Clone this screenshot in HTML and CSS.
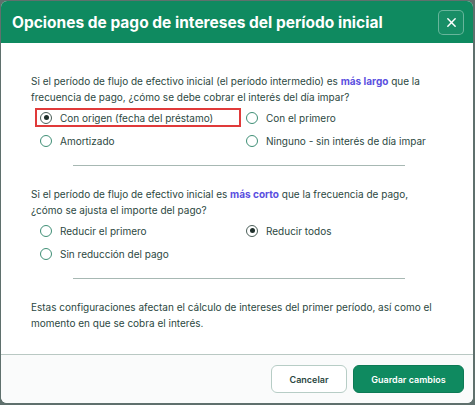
FILE: index.html
```html
<!DOCTYPE html>
<html lang="es">
<head>
<meta charset="utf-8">
<title>Opciones de pago</title>
<link rel="stylesheet" href="styles.css">
</head>
<body>
<div class="dialog">
  <header class="dialog-header">
    <h1 class="dialog-title">Opciones de pago de intereses del período inicial</h1>
    <button class="close-btn" aria-label="Cerrar">
      <svg width="11" height="11" viewBox="0 0 12 12"><path d="M2 2L10 10M10 2L2 10" stroke="#fff" stroke-width="1.6" stroke-linecap="round"/></svg>
    </button>
  </header>
  <main class="dialog-body">
    <section class="group">
      <p class="question"><span class="line">Si el período de flujo de efectivo inicial (el período intermedio) es <b class="accent">más largo</b> que la</span><span class="line">frecuencia de pago, ¿cómo se debe cobrar el interés del día impar?</span></p>
      <div class="options">
        <label class="option highlighted"><span class="radio checked"></span>Con origen (fecha del préstamo)</label>
        <label class="option"><span class="radio"></span>Con el primero</label>
        <label class="option"><span class="radio"></span>Amortizado</label>
        <label class="option"><span class="radio"></span>Ninguno - sin interés de día impar</label>
      </div>
    </section>
    <hr class="divider">
    <section class="group">
      <p class="question"><span class="line">Si el período de flujo de efectivo inicial es <b class="accent">más corto</b> que la frecuencia de pago,</span><span class="line">¿cómo se ajusta el importe del pago?</span></p>
      <div class="options">
        <label class="option"><span class="radio"></span>Reducir el primero</label>
        <label class="option"><span class="radio checked"></span>Reducir todos</label>
        <label class="option"><span class="radio"></span>Sin reducción del pago</label>
      </div>
    </section>
    <hr class="divider">
    <p class="note">Estas configuraciones afectan el cálculo de intereses del primer período, así como el momento en que se cobra el interés.</p>
  </main>
  <footer class="dialog-footer">
    <button class="btn btn-secondary">Cancelar</button>
    <button class="btn btn-primary">Guardar cambios</button>
  </footer>
</div>
</body>
</html>
```

FILE: styles.css
```css
* { box-sizing: border-box; }
html, body { height: 100%; }
body {
  margin: 0;
  padding: 1px 2px 2px 1px;
  background: #5f706d;
  font-family: Inter, "Noto Sans", sans-serif;
  color: #2c4842;
}
.dialog {
  height: 402px;
  background: #fff;
  border-radius: 6px;
  overflow: hidden;
  display: flex;
  flex-direction: column;
}
.dialog-header {
  background: #0f8a60;
  height: 42px;
  padding: 0 9px 0 11px;
  display: flex;
  align-items: center;
  justify-content: space-between;
}
.dialog-title {
  margin: 0;
  color: #fff;
  font-size: 15.5px;
  font-weight: 700;
}
.close-btn {
  width: 26px;
  height: 25px;
  border: 1px solid rgba(255,255,255,0.35);
  border-radius: 5px;
  background: rgba(255,255,255,0.04);
  display: flex;
  align-items: center;
  justify-content: center;
  padding: 0;
}
.dialog-body {
  flex: 1;
  padding: 30px 40px 0 30px;
  font-size: 10px;
}
.question {
  margin: 0 0 3px;
  line-height: 16px;
}
.question .line {
  display: block;
  white-space: nowrap;
}
.accent {
  color: #5a4fe0;
  font-weight: 700;
}
.options {
  display: grid;
  grid-template-columns: 206px 1fr;
  row-gap: 4px;
  margin-left: 4px;
}
.option {
  display: flex;
  align-items: center;
  gap: 8px;
  height: 19px;
  padding: 0 3px;
  border: 2px solid transparent;
  white-space: nowrap;
}
.option.highlighted {
  border-color: #e03a3a;
}
.radio {
  width: 12px;
  height: 12px;
  border: 1px solid #3f8f76;
  border-radius: 50%;
  display: inline-flex;
  align-items: center;
  justify-content: center;
  flex: none;
}
.radio.checked::after {
  content: "";
  width: 5px;
  height: 5px;
  border-radius: 50%;
  background: #1f2f2b;
}
.radio.checked { border-color: #4a5e58; }
.divider {
  width: 332px;
  margin: 15px 0 20px 42px;
  border: 0;
  border-top: 1px solid #a7b8b3;
}
.note {
  margin: 0;
  line-height: 16px;
}
.dialog-footer {
  border-top: 1px solid #b9c8c3;
  background: #fafbfb;
  padding: 10px 9px 10px 10px;
  display: flex;
  justify-content: flex-end;
  gap: 6px;
}
.btn {
  height: 28px;
  border-radius: 6px;
  font-family: Inter, "Noto Sans", sans-serif;
  font-size: 9px;
  font-weight: 600;
  padding: 0;
}
.btn-secondary {
  width: 76px;
  background: #fff;
  border: 1px solid #b7cdc6;
  color: #2c4842;
}
.btn-primary {
  width: 111px;
  background: #0f8a60;
  border: 1px solid #0c7a55;
  color: #fff;
}
```
